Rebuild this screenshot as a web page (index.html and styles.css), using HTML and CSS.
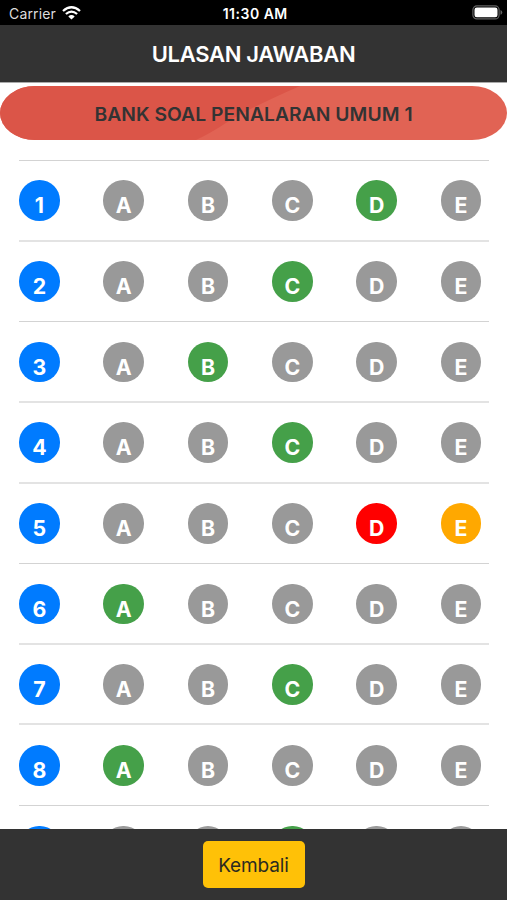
FILE: index.html
```
<!DOCTYPE html>
<html lang="id">
<head>
<meta charset="utf-8">
<title>Ulasan Jawaban</title>
<link rel="stylesheet" href="styles.css">
</head>
<body>
<div class="status">
  <div class="carrier"><span>Carrier</span>
    <svg class="wifi" width="19" height="14" viewBox="0 0 19 14"><path d="M1 5Q9.500-2.400 18 5M3.900 8Q9.500 3.200 15.100 8" fill="none" stroke="#fff" stroke-width="2.300"/><path d="M6.300 10.400Q9.500 7.700 12.700 10.400L9.500 13.600Z" fill="#fff"/></svg>
  </div>
  <span class="time">11:30 AM</span>
  <svg class="battery" width="31" height="15" viewBox="0 0 31 15"><rect x=".9" y=".9" width="26.200" height="13" rx="4" fill="none" stroke="#626262" stroke-width="1.200"/><rect x="2.500" y="2.500" width="23" height="9.800" rx="2.300" fill="#fff"/><path d="M28.500 5Q30.300 5.600 30.300 7.400T28.500 9.800Z" fill="#626262"/></svg>
</div>
<header class="header"><h1>ULASAN JAWABAN</h1></header>
<main class="content">
  <div class="banner">
    <svg class="shade" viewBox="0 0 507 54" preserveAspectRatio="none"><path d="M0 0H300Q254 20 229 35Q211 47 196 54H0Z" fill="#db5548"/></svg>
    <h2>BANK SOAL PENALARAN UMUM 1</h2>
  </div>
  <div class="list">
    <div class="row"><b class="num">1</b><b>A</b><b>B</b><b>C</b><b class="right">D</b><b>E</b></div>
    <div class="row soft"><b class="num">2</b><b>A</b><b>B</b><b class="right">C</b><b>D</b><b>E</b></div>
    <div class="row"><b class="num">3</b><b>A</b><b class="right">B</b><b>C</b><b>D</b><b>E</b></div>
    <div class="row soft"><b class="num">4</b><b>A</b><b>B</b><b class="right">C</b><b>D</b><b>E</b></div>
    <div class="row soft"><b class="num">5</b><b>A</b><b>B</b><b>C</b><b class="wrong">D</b><b class="key">E</b></div>
    <div class="row"><b class="num">6</b><b class="right">A</b><b>B</b><b>C</b><b>D</b><b>E</b></div>
    <div class="row soft"><b class="num">7</b><b>A</b><b>B</b><b class="right">C</b><b>D</b><b>E</b></div>
    <div class="row soft"><b class="num">8</b><b class="right">A</b><b>B</b><b>C</b><b>D</b><b>E</b></div>
    <div class="row"><b class="num"></b><b></b><b></b><b class="right"></b><b></b><b></b></div>
  </div>
</main>
<footer class="footer"><button class="back">Kembali</button></footer>
</body>
</html>
```

FILE: styles.css
```
* { box-sizing: border-box; }
body {
  margin: 0;
  height: 900px;
  display: flex;
  flex-direction: column;
  overflow: hidden;
  background: #fff;
  font-family: Inter, sans-serif;
}
.status {
  height: 25px;
  flex: none;
  display: grid;
  grid-template-columns: 1fr auto 1fr;
  align-items: center;
  padding: 2px 6px 0 9px;
  background: #000;
  color: #fff;
  font-size: 14px;
}
.carrier { display: flex; align-items: center; gap: 6px; color: #ddd; letter-spacing: 0.15px; }
.wifi { margin-top: -2px; }
.time { font-weight: 600; letter-spacing: 0.5px; margin-right: -0.5px; }
.battery { justify-self: end; margin-top: -2px; margin-right: -2px; }
.header {
  height: 57px;
  flex: none;
  display: flex;
  align-items: center;
  justify-content: center;
  background: #333;
  color: #fff;
  box-shadow: 0 1px 0 #aaa;
}
h1 { margin: 1px 0 0; font-size: 22px; font-weight: 600; letter-spacing: -0.3px; white-space: nowrap; }
.content { flex: 1; min-height: 0; overflow: hidden; padding-top: 4px; margin-top: 1px; }
.banner {
  position: relative;
  height: 54px;
  margin-top: -1px;
  border-radius: 35px / 27px;
  overflow: hidden;
  background: #e16354;
  display: flex;
  align-items: center;
  justify-content: center;
}
.shade { position: absolute; inset: 0; width: 100%; height: 100%; }
h2 {
  position: relative;
  margin: 1px 0 0;
  color: #333;
  font-size: 19.3px;
  font-weight: 600;
  letter-spacing: 0.05px;
  white-space: nowrap;
}
.list { padding: 0 18px 0 19px; margin-top: 20px; }
.row {
  height: 80.65px;
  border-top: 1px solid #d3d3d3;
  display: grid;
  grid-template-columns: repeat(6, 84.35px);
  align-items: center;
}
.row.soft { border-top-color: #e3e3e3; box-shadow: 0 -1px 0 #e3e3e3; }
.row b {
  width: 40.7px;
  height: 40.7px;
  border-radius: 50%;
  background: #999;
  color: #fff;
  font-size: 21.3px;
  font-weight: 700;
  line-height: 40.7px;
  padding-top: 5px;
  text-align: center;
}
.row .num { background: #007bff; }
.row .right { background: #45a049; }
.row .wrong { background: #f00; }
.row .key { background: #ffa800; }
.footer {
  height: 71px;
  flex: none;
  display: flex;
  justify-content: center;
  padding-top: 12px;
  background: #333;
}
.back {
  width: 102px;
  height: 47px;
  padding: 2px 0 0;
  border: 0;
  border-radius: 5px;
  background: #ffc107;
  color: #2b2b20;
  font: 400 19px Inter, sans-serif;
  letter-spacing: -0.1px;
}
```
